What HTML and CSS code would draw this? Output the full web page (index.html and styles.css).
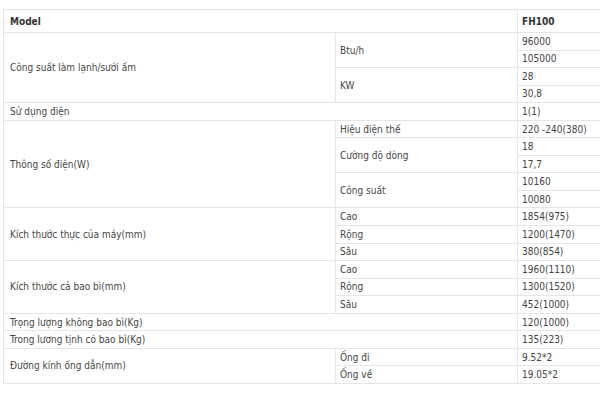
FILE: index.html
```html
<!DOCTYPE html>
<html lang="vi">
<head>
<meta charset="utf-8">
<link rel="stylesheet" href="styles.css">
</head>
<body>
<div class="wrap">
<table class="spec">
  <colgroup><col class="c1"><col class="c2"><col class="c3"></colgroup>
  <tr class="head"><td class="k" colspan="2">Model</td><td>FH100</td></tr>
  <tr><td class="k" rowspan="4">Công suất làm lạnh/sưới ấm</td><td rowspan="2">Btu/h</td><td>96000</td></tr>
  <tr><td>105000</td></tr>
  <tr><td rowspan="2">KW</td><td>28</td></tr>
  <tr><td>30,8</td></tr>
  <tr><td class="k" colspan="2">Sử dụng điện</td><td>1(1)</td></tr>
  <tr><td class="k" rowspan="5">Thông số điện(W)</td><td>Hiệu điện thế</td><td>220 -240(380)</td></tr>
  <tr><td rowspan="2">Cường độ dòng</td><td>18</td></tr>
  <tr><td>17,7</td></tr>
  <tr><td rowspan="2">Công suất</td><td>10160</td></tr>
  <tr><td>10080</td></tr>
  <tr><td class="k" rowspan="3">Kích thước thực của máy(mm)</td><td>Cao</td><td>1854(975)</td></tr>
  <tr><td>Rộng</td><td>1200(1470)</td></tr>
  <tr><td>Sâu</td><td>380(854)</td></tr>
  <tr><td class="k" rowspan="3">Kích thước cả bao bì(mm)</td><td>Cao</td><td>1960(1110)</td></tr>
  <tr><td>Rộng</td><td>1300(1520)</td></tr>
  <tr><td>Sâu</td><td>452(1000)</td></tr>
  <tr><td class="k" colspan="2">Trọng lượng không bao bì(Kg)</td><td>120(1000)</td></tr>
  <tr><td class="k" colspan="2">Trong lương tịnh có bao bì(Kg)</td><td>135(223)</td></tr>
  <tr><td class="k" rowspan="2">Đường kính ống dẫn(mm)</td><td>Ống đi</td><td>9.52*2</td></tr>
  <tr><td>Ống về</td><td>19.05*2</td></tr>
</table>
</div>
</body>
</html>
```
FILE: styles.css
```css
html, body {
  margin: 0;
  padding: 0;
  background: #ffffff;
}
.wrap {
  width: 600px;
  height: 400px;
  overflow: hidden;
  padding-top: 9px;
  padding-left: 3px;
  box-sizing: border-box;
}
.spec {
  border-collapse: collapse;
  table-layout: fixed;
  width: 640px;
  font-family: "DejaVu Sans Condensed", "DejaVu Sans", sans-serif;
  font-stretch: condensed;
  font-size: 10px;
  color: #444444;
}
.c1 { width: 332px; }
.c2 { width: 182px; }
.c3 { width: 126px; }
.spec td {
  border: 1px solid #e6e6e6;
  padding: 0 4px;
  height: 17.55px;
  line-height: 13px;
  vertical-align: middle;
  white-space: nowrap;
  box-sizing: border-box;
}
.spec td.k { padding-left: 6px; }
.head td {
  height: 23px;
  font-weight: bold;
  color: #333333;
}
```
